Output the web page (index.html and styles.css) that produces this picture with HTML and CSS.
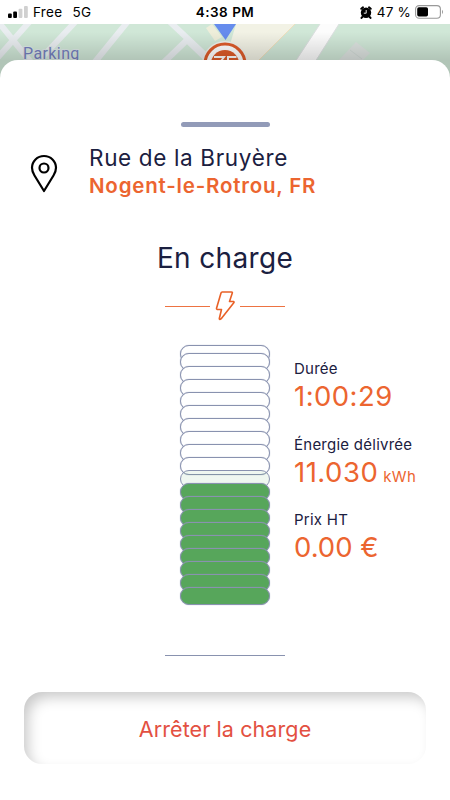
FILE: index.html
```html
<!DOCTYPE html>
<html lang="fr">
<head>
<meta charset="utf-8">
<title>En charge</title>
<link rel="stylesheet" href="styles.css">
</head>
<body>
<header class="status">
  <div class="carrier">
    <svg width="20" height="12" viewBox="0 0 20 12"><rect x="0" y="7.5" width="3.8" height="4.5" rx="1"/><rect x="5.2" y="5.5" width="3.8" height="6.5" rx="1"/><rect x="10.6" y="2.8" width="3.8" height="9.2" rx="1" fill="#d0d0d0"/><rect x="16" y="0" width="3.8" height="12" rx="1" fill="#d0d0d0"/></svg>
    <span class="network">Free</span><span class="radio">5G</span>
  </div>
  <span class="clock">4:38 PM</span>
  <div class="power">
    <svg width="12" height="13" viewBox="0 0 12 13"><circle cx="6" cy="6.8" r="5.2"/><path d="M1.300 2.800 3 1.300M10.700 2.800 9 1.300M2.300 11l-.8.9M9.700 11l.8.9" stroke="#000" stroke-width="2" stroke-linecap="round"/><path d="M6.200 4v3.200H3.800" fill="none" stroke="#fff" stroke-width=".9"/></svg>
    <span class="percent">47 %</span>
    <svg width="29" height="14" viewBox="0 0 29 14"><rect x=".6" y=".6" width="24.8" height="12.6" rx="3.5" fill="none" stroke="#999" stroke-width="1.1"/><rect x="2.2" y="2.3" width="10.8" height="9.2" rx="1.7"/><path d="M27 4.7q2 2.2 0 4.5z" fill="#999"/></svg>
  </div>
</header>
<div class="map">
  <svg width="450" height="60" viewBox="0 24 450 60">
    <rect y="24" width="450" height="60" fill="#d0e7d7"/>
    <path d="M236 24H295L257 62H225z" fill="#f2f2e5"/>
    <path d="M295 24 257 62" stroke="#efdfbd"/>
    <g fill="none" stroke="#e9edf0" stroke-width="6"><path d="M0 24 42 76M31 20-8 64M77 20 34 66M129 20 90 68M168 20 204 54M187 40 160 66M187 40 212 64"/></g>
    <path d="M320 24h19l-24 38h-20z" fill="#fcfcfc"/>
    <path d="m339 24-24 38M320 24l-25 38" fill="none" stroke="#dcdfe0"/>
    <path d="m337 62 19-20 14 11-9 9z" fill="#dce2df"/><path d="m350 50 12 9" stroke="#d0d9d5"/>
    <path d="M206 28l6-4 10 13-7 4z" fill="#eeeeda"/>
    <path d="M214 24h22L225.500 40z" fill="#668ced"/>
    <circle cx="225" cy="64" r="23" fill="#eef0eb"/>
    <circle cx="225" cy="64" r="20" fill="#fff" stroke="#dd5b2a" stroke-width="3"/>
    <circle cx="225" cy="64" r="14" fill="#dd5b2a"/>
    <path d="M214 57h10l-6 8M236.500 57H228v6h7" fill="none" stroke="#fff" stroke-width="2"/>
  </svg>
  <span class="place">Parking</span>
</div>
<main class="sheet">
  <div class="handle"></div>
  <section class="station">
    <svg class="pin" width="28" height="40" viewBox="0 0 28 40" fill="none" stroke="#000"><path d="M14 37 4.500 21.500C2.800 18.800 2 16.500 2 13.800 2 7.200 7.300 2 14 2s12 5.200 12 11.800c0 2.700-.8 5-2.500 7.700z" stroke-width="2.200" stroke-linejoin="round"/><circle cx="14" cy="14" r="4.500" stroke-width="2.200"/></svg>
    <div><div class="street">Rue de la Bruyère</div><div class="city">Nogent-le-Rotrou, FR</div></div>
  </section>
  <h1 class="title">En charge</h1>
  <div class="divider"><i></i><svg width="22" height="32" viewBox="0 0 22 32"><path d="M8.200 2h9.300q1.200 0 .8 1L15.500 11.500H19.500q1 .3.300 1.200L7.200 28.700Q5.300 30.500 5.300 28.500L7.500 19.500H3.200Q2.300 19.300 2.600 18L7 3Q7.300 2 8.200 2z" fill="none" stroke="#e96127" stroke-width="1.600" stroke-linejoin="round"/></svg><i></i></div>
  <section class="charge">
    <div class="battery">
      <b class="first"></b><b></b><b></b><b></b><b></b><b></b><b></b><b></b><b></b><b></b><b class="partial"></b>
      <b class="full"></b><b class="full"></b><b class="full"></b><b class="full"></b><b class="full"></b><b class="full"></b><b class="full"></b><b class="full"></b><b class="full"></b>
    </div>
    <div class="stats">
      <div class="stat"><div class="label">Durée</div><div class="value duration">1:00:29</div></div>
      <div class="stat"><div class="label">Énergie délivrée</div><div class="value energy">11.030<small>kWh</small></div></div>
      <div class="stat"><div class="label">Prix HT</div><div class="value">0.00 €</div></div>
    </div>
  </section>
  <div class="rule"></div>
  <button class="stop">Arrêter la charge</button>
</main>
</body>
</html>
```
FILE: styles.css
```css
* { box-sizing: border-box; }
body { margin: 0; width: 450px; height: 800px; overflow: hidden; background: #fff; font-family: Inter, sans-serif; color: #1b2040; }
svg { display: block; flex: none; }
.status { height: 24px; display: grid; grid-template-columns: 1fr auto 1fr; align-items: center; color: #000; font-size: 13.5px; line-height: 24px; white-space: nowrap; }
.carrier { display: flex; align-items: center; padding-left: 8px; }
.network { margin-left: 5px; letter-spacing: .3px; }
.radio { margin-left: 10px; letter-spacing: .3px; }
.clock { font-weight: 600; font-size: 13.5px; letter-spacing: .5px; }
.power { display: flex; align-items: center; justify-content: flex-end; padding-right: 6px; }
.percent { margin: 0 4px 0 5px; letter-spacing: .2px; }
.map { height: 60px; position: relative; overflow: hidden; }
.map::after { content: ""; position: absolute; inset: 0; background: linear-gradient(#0000 8px, #00000026 36px); }
.place { position: absolute; left: 23px; top: 20px; font: 400 16px/20px Roboto, sans-serif; color: #747fbd; -webkit-text-stroke: 2px #dce8e6; paint-order: stroke fill; letter-spacing: .4px; }
.sheet { position: relative; height: 740px; margin-top: -24px; background: #fff; border-radius: 18px 18px 0 0; display: flex; flex-direction: column; align-items: center; }
.handle { width: 89px; height: 5px; margin-top: 62px; border-radius: 3px; background: #929bb8; flex: none; }
.station { width: 100%; height: 58px; margin-top: 17px; display: flex; align-items: flex-start; }
.pin { margin: 10px 31px 0 30px; }
.street { font-size: 22.5px; line-height: 28px; font-weight: 375; white-space: nowrap; letter-spacing: .65px; }
.city { font-size: 20.5px; line-height: 28px; font-weight: 600; color: #ec6530; white-space: nowrap; letter-spacing: .8px; }
.title { margin: 38px 0 0; font-size: 28px; line-height: 36px; font-weight: 375; white-space: nowrap; letter-spacing: .35px; }
.divider { margin-top: 14px; height: 32px; display: flex; align-items: center; gap: 4px; }
.divider i { width: 45px; height: 1px; background: #ed7342; }
.charge { width: 100%; display: flex; margin-top: 23px; }
.battery { width: 90px; height: 261px; margin-left: 180px; display: flex; flex-direction: column; }
.battery b { height: 18px; margin-bottom: -5px; flex: none; border: 1px solid #8992af; border-radius: 9px; background: #fff; box-shadow: 0 0 1px #929bb8; }
.battery .first { margin-bottom: -10px; }
.battery .partial { background: #57a65b18; box-shadow: none; }
.battery .full { background: #57a65b; }
.stats { margin-left: 24px; padding-top: 14px; }
.stat { height: 75.500px; white-space: nowrap; }
.label { font-size: 15px; line-height: 20px; font-weight: 375; letter-spacing: .25px; }
.value { font-size: 27.5px; line-height: 35px; font-weight: 370; color: #ec6530; display: flex; align-items: baseline; letter-spacing: 0; }
.duration { letter-spacing: .45px; }
.energy { letter-spacing: .5px; }
.value small { font-size: 15px; margin-left: 5px; letter-spacing: .3px; }
.rule { width: 120px; height: 1px; margin-top: 49px; background: #8992af; flex: none; }
.stop { width: 402px; height: 72px; margin-top: 36px; padding: 2px 0 0; border: 0; border-radius: 18px; background: #fff; box-shadow: inset 6px 7px 14px -2px #00000038; color: #e35041; font: 375 21.5px/28px Inter, sans-serif; letter-spacing: .1px; flex: none; }
```
